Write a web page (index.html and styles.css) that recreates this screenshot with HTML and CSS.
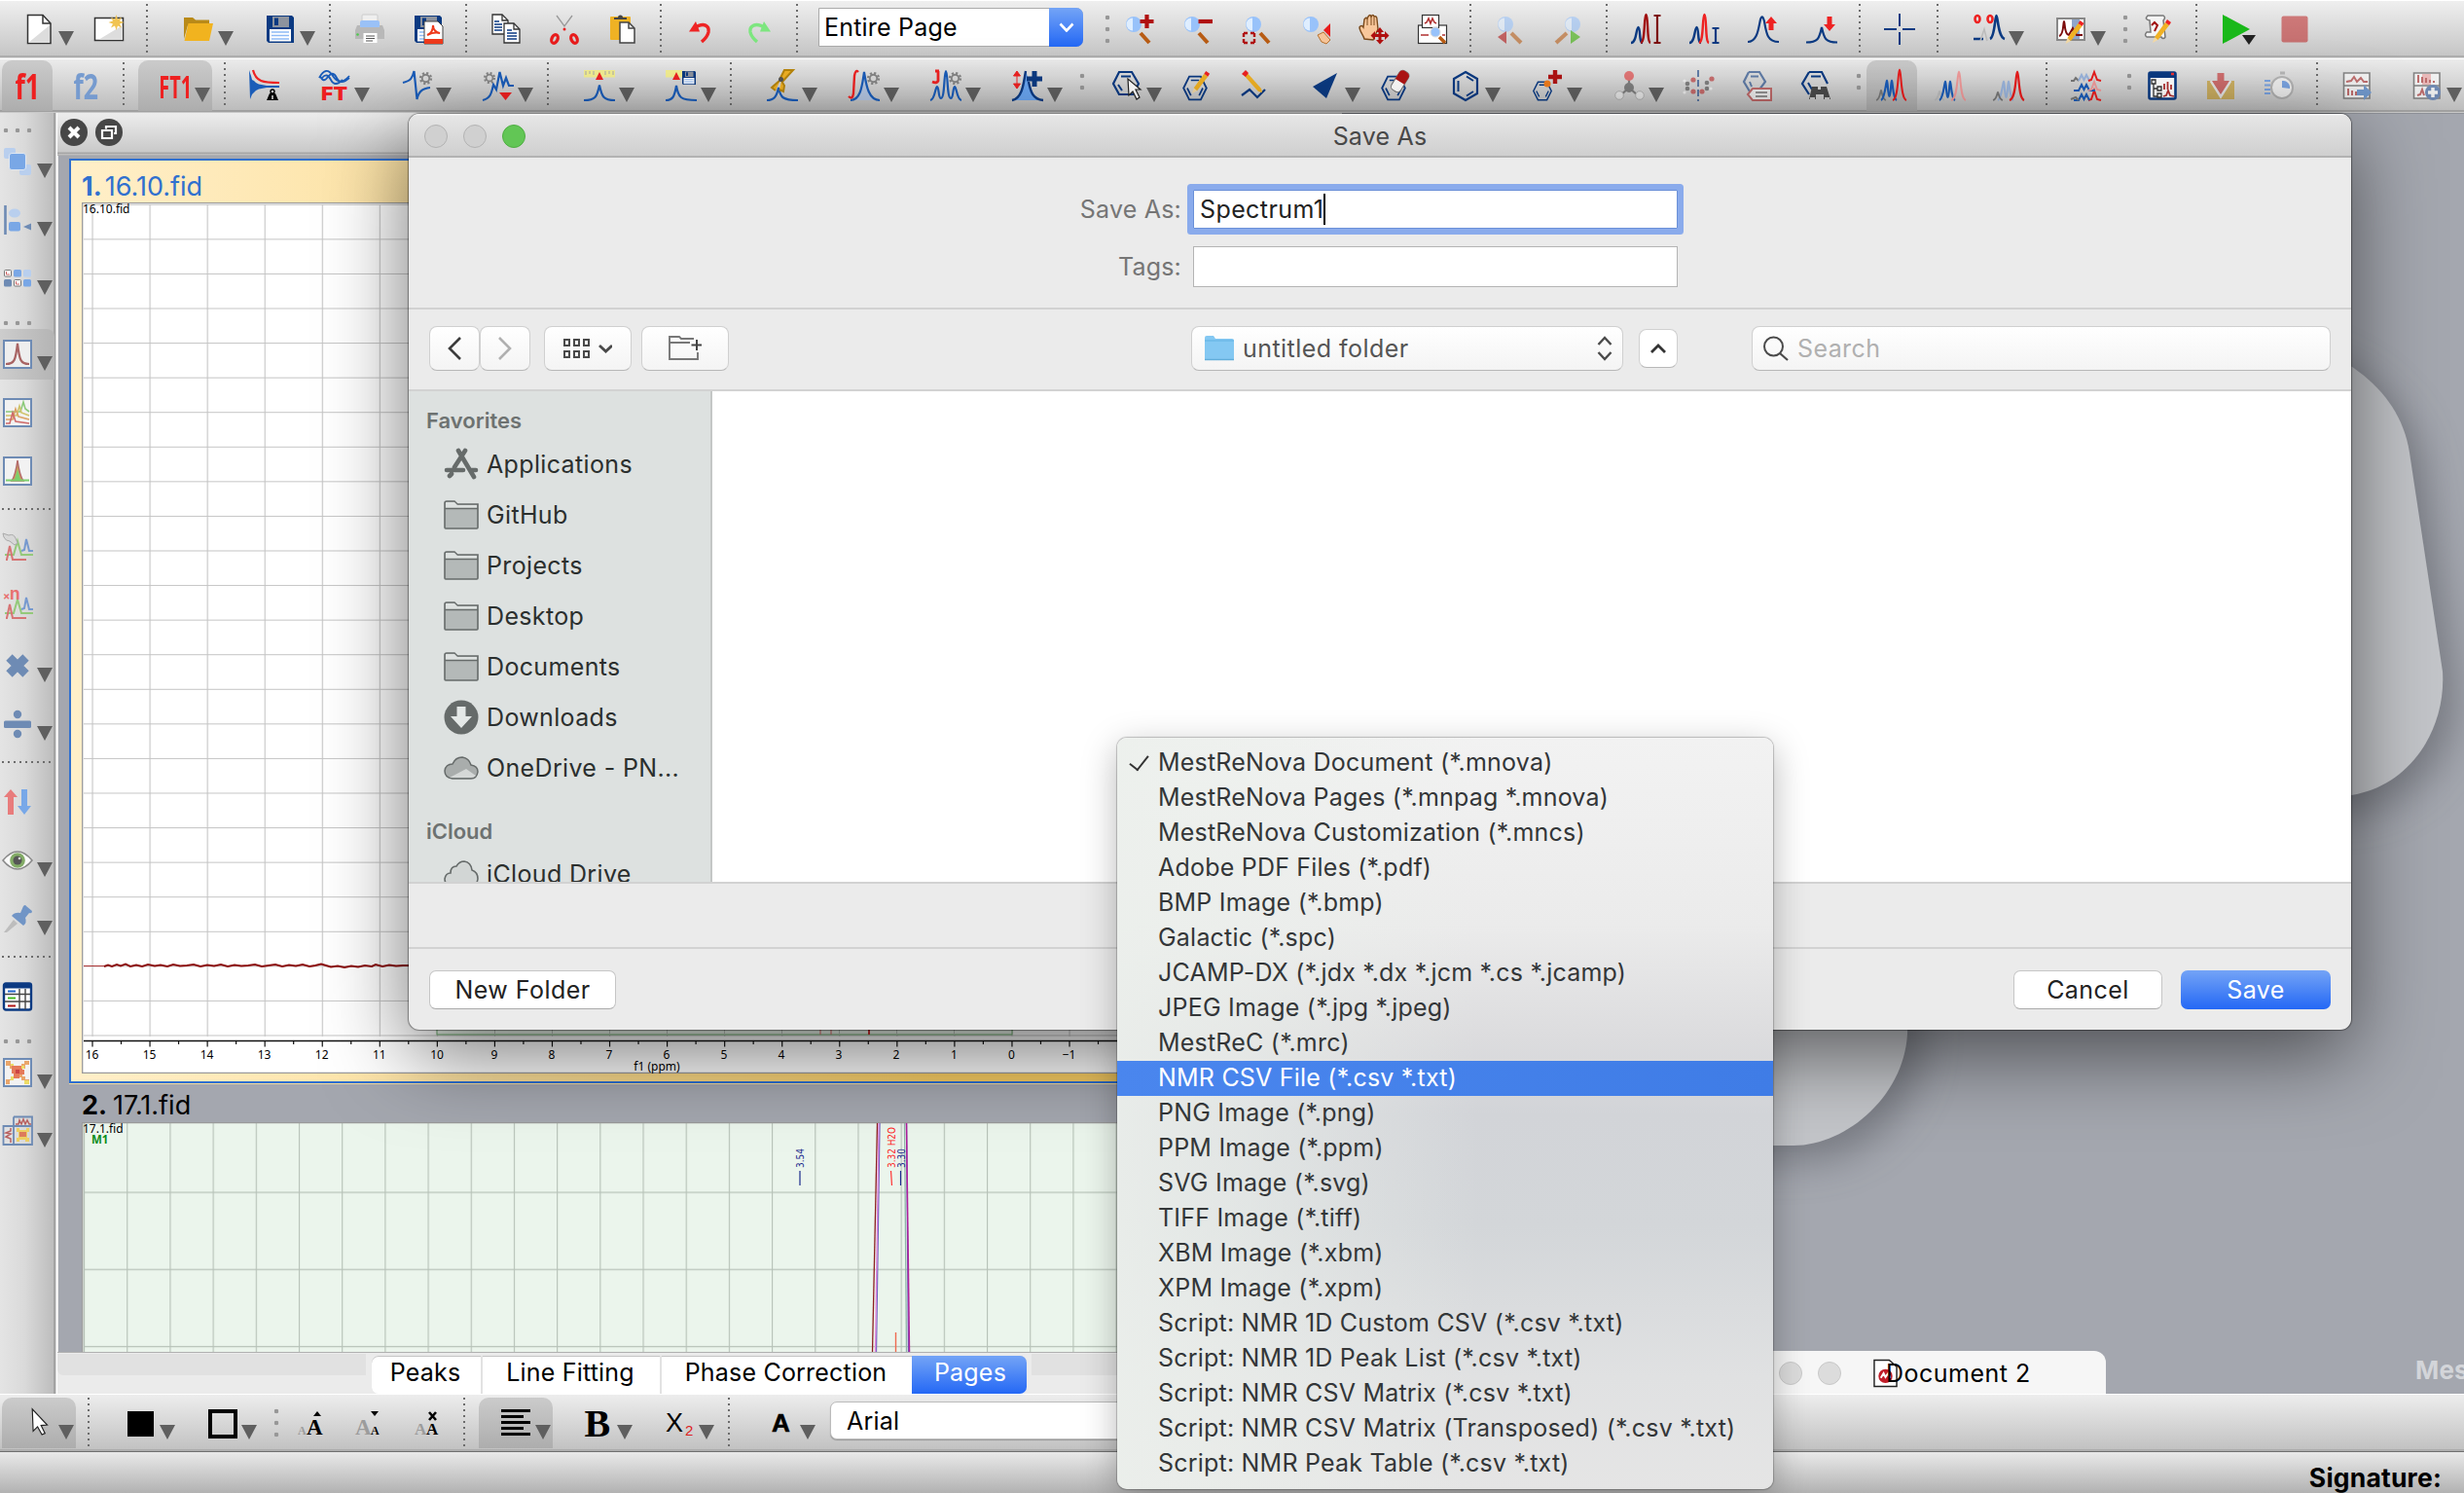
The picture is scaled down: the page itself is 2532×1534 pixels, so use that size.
FILE: index.html
```html
<!DOCTYPE html>
<html lang="en">
<head>
<meta charset="utf-8">
<title>MestReNova - Save As</title>
<link rel="stylesheet" href="styles.css">
</head>
<body>
<svg class="defs" width="0" height="0">
  <symbol id="lens" viewBox="0 0 32 32" overflow="visible">
    <path d="M16 20L25 30" stroke="#b85c14" stroke-width="4"/>
    <circle cx="9" cy="11" r="8" fill="#98c2fa"/><path d="M8 4.500A6.500 6.500 0 0 0 8 17.500z" fill="#dfeeff"/>
  </symbol>
  <symbol id="gear" viewBox="0 0 14 14" overflow="visible">
    <circle cx="7" cy="7" r="5.800" fill="none" stroke="#858585" stroke-width="2.600" stroke-dasharray="2.300 2.255"/>
    <circle cx="7" cy="7" r="4" fill="none" stroke="#858585" stroke-width="2"/>
  </symbol>
  <symbol id="pencil" viewBox="0 0 20 26" overflow="visible">
    <path d="M1 25L3 19L6.500 22z" fill="#f3d9a4"/><path d="M3 19L14 4L18 7L6.500 22z" fill="#f0b124"/><path d="M14 4L16 1L20 4L18 7z" fill="#ee2222"/>
  </symbol>
  <symbol id="hex" viewBox="0 0 32 32" overflow="visible">
    <path d="M9 2H23L30 16L23 30H9L2 16z" fill="none" stroke="#0b3a82" stroke-width="2.200"/>
    <path d="M11 6.500H21M6.500 16L11 25M25.500 16L21 25" fill="none" stroke="#0b3a82" stroke-width="2"/>
  </symbol>
  <symbol id="floppy" viewBox="0 0 32 32" overflow="visible">
    <path d="M2 2H28L30 4V30H4L2 28z" fill="#0b3a82"/><rect x="8" y="3" width="17" height="11" fill="#8d939e"/><rect x="10" y="4.500" width="4" height="7.500" fill="#0b3a82"/>
    <rect x="5" y="16" width="22" height="12.500" fill="#fff"/><path d="M7 19H25M7 22.500H25M7 26H25" stroke="#8fbaf6" stroke-width="1.600"/>
  </symbol>
  <symbol id="page" viewBox="0 0 18 22" overflow="visible">
    <path d="M1 1H11L17 7V21H1z" fill="#fff" stroke="#333" stroke-width="1.300"/><path d="M11 1V7H17" fill="none" stroke="#333" stroke-width="1.300"/>
  </symbol>
  <symbol id="peak" viewBox="0 0 32 16" overflow="visible">
    <path d="M0 15.500C12 15.500 13.500 12 16 0C18.500 12 20 15.500 32 15.500" fill="none" stroke-width="2.200"/>
  </symbol>
  <symbol id="trio" viewBox="0 0 32 32" overflow="visible">
    <path d="M0 31C4 30 4 22 5 21C6 22 6 30 10 31" fill="none" stroke="#777" stroke-width="1.800"/>
    <path d="M5 31C9 29 10 12 11 11C12 12 12 27 13.500 27C15 27 15 12 16 11C17 12 17 29 21 31" fill="none" stroke="#1a5cb8" stroke-width="2.200"/>
    <path d="M17 31C23 29 22 2 24 0C26 2 25 29 31 31" fill="none" stroke="#e81c1c" stroke-width="2"/>
  </symbol>
  <symbol id="folder" viewBox="0 0 36 30" overflow="visible">
    <path d="M1 28V3Q1 1 3 1H11L14 4H35V28Q35 29 34 29H2Q1 29 1 28z" fill="#b4b9b8" stroke="#666b6a" stroke-width="1.600"/><path d="M2 2H11L14 5H34V8H2z" fill="#dee2e1"/><path d="M1 8.500H35" stroke="#666b6a" stroke-width="1.600"/>
  </symbol>
</svg>

<div class="toolbar">
  <span class="btn menu"><svg viewBox="0 0 32 32"><path d="M4.500 1.500H20L28 10V30.500H4.500z" fill="#fff" stroke="#333" stroke-width="1.500"/><path d="M5 30L27 12V30z" fill="#ddd"/><path d="M20 1.500V10H28" fill="none" stroke="#333" stroke-width="1.500"/></svg></span>
  <span class="btn"><svg viewBox="0 0 32 32"><rect x="1.500" y="4.500" width="29" height="23" fill="#fff" stroke="#333" stroke-width="1.500"/><path d="M5 27L30 12V27z" fill="#ddd"/><path d="M23.500 1L25 6L29 3.500L27 7.500L31.500 9L27 10.500L29 14.500L25 12.500L23.500 17L22 12.500L18 14.500L20 10.500L15.500 9L20 7.500L18 3.500L22 6z" fill="#f1c453"/></svg></span>
  <span class="sep"></span>
  <span class="btn menu"><svg viewBox="0 0 32 32"><path d="M1 4H10L13 6.500H27V12H5L1 26z" fill="#b98a18"/><path d="M5.500 10H31L27 28H1.500z" fill="#f1b31f"/></svg></span>
  <span class="btn menu"><svg viewBox="0 0 32 32"><use href="#floppy"/></svg></span>
  <span class="sep"></span>
  <span class="btn"><svg viewBox="0 0 32 32"><rect x="8" y="1" width="16" height="8" rx="1" fill="#efefef" stroke="#ccc"/><rect x="6" y="7" width="20" height="8" rx="2" fill="#9ac1f7"/><path d="M3 12H6V14H26V12H29L31 17V26H1V17z" fill="#b8b8b8"/><circle cx="3.500" cy="21.500" r="1.300" fill="#4ec94e"/><rect x="9.500" y="20" width="14" height="10" fill="#fff"/><path d="M12 23H21M12 25.500H21M12 28H19" stroke="#555" stroke-width="1.200"/></svg></span>
  <span class="btn"><svg viewBox="0 0 32 32"><use href="#floppy"/><path d="M12 8H26L31 13V31H12z" fill="#fff" stroke="#444"/><path d="M15 22C20 20 21 15 21 12C21 16 24 20 28 20C24 19 19 20 15 22z" fill="none" stroke="#ee3a1c" stroke-width="2"/><rect x="12" y="26" width="19" height="5" fill="#ee3a1c"/></svg></span>
  <span class="sep"></span>
  <span class="btn"><svg viewBox="0 0 32 32"><use href="#page" x="1" y="0" width="18" height="22"/><path d="M4 8H9M4 11H12M4 14H12M4 17H12" stroke="#0b3a82" stroke-width="1.500"/><use href="#page" x="13" y="9" width="18" height="22"/><path d="M17 17H22M17 20H27M17 23H27M17 26H27" stroke="#0b3a82" stroke-width="1.500"/></svg></span>
  <span class="btn"><svg viewBox="0 0 32 32"><path d="M8 2L16 13L24 2" fill="none" stroke="#999" stroke-width="1.300"/><circle cx="16" cy="16" r="1.500" fill="#e81c1c"/><ellipse cx="6" cy="26" rx="3" ry="4.500" fill="none" stroke="#e81c1c" stroke-width="3.200" transform="rotate(25 6 26)"/><ellipse cx="26" cy="26" rx="3" ry="4.500" fill="none" stroke="#e81c1c" stroke-width="3.200" transform="rotate(-25 26 26)"/></svg></span>
  <span class="btn"><svg viewBox="0 0 32 32"><rect x="3" y="3" width="21" height="24" rx="1" fill="#efb224"/><path d="M7 6H20V4H16A2.500 2.500 0 0 0 11 4H7z" fill="#444"/><path d="M13 9H22L28 15V30H13z" fill="#fff" stroke="#444" stroke-width="1.500"/><path d="M22 9V15H28" fill="none" stroke="#444" stroke-width="1.500"/></svg></span>
  <span class="sep"></span>
  <span class="btn"><svg viewBox="0 0 32 32"><path d="M9 15C20 8 25 13 24 19Q23 24 17 29" fill="none" stroke="#ee2424" stroke-width="3.400"/><path d="M4 18.500L11 8L15 18.500z" fill="#ee2424"/></svg></span>
  <span class="btn"><svg viewBox="0 0 32 32"><path d="M23 15C12 8 6 13 7 19Q8 24 14 29" fill="none" stroke="#7de67f" stroke-width="3.400"/><path d="M28 18.500L21 8L17 18.500z" fill="#7de67f"/></svg></span>
  <span class="sep"></span>
  <div class="zoom-select"><span>Entire Page</span><i><svg viewBox="0 0 16 10"><path d="M1.500 1.500L8 8.500L14.500 1.500" fill="none" stroke="#fff" stroke-width="2.600"/></svg></i></div>
  <span class="grip three"></span>
  <span class="btn"><svg viewBox="0 0 32 32"><use href="#lens"/><path d="M22.500 1V15M15.500 8H29.500" stroke="#b01010" stroke-width="4.200"/></svg></span>
  <span class="btn"><svg viewBox="0 0 32 32"><use href="#lens"/><path d="M15.500 8H30" stroke="#b01010" stroke-width="4.200"/></svg></span>
  <span class="btn"><svg viewBox="0 0 32 32"><use href="#lens" x="3"/><path d="M2 20h4M2 20v4M13 20h-4M13 20v4M2 30h4M2 30v-4M13 30h-4M13 30v-4" stroke="#b01010" stroke-width="2.400"/></svg></span>
  <span class="btn"><svg viewBox="0 0 32 32"><circle cx="11" cy="11" r="8" fill="#98c2fa"/><path d="M10 4.500A6.500 6.500 0 0 0 10 17.500z" fill="#dfeeff"/><path d="M31 10V24L24 17z" fill="#e81c1c"/><path d="M18 22L24 19L31 27L27 31L22 29z" fill="#f6c59a" stroke="#b8722e"/></svg></span>
  <span class="btn"><svg viewBox="0 0 32 32"><path d="M6 26C5 22 1 18 1 14Q3 11 5 14L6 6Q8 3 9 5L10 3Q12 0 13 3Q15 0 16 3Q19 2 19 6L20 16L15 27z" fill="#f8c79b" stroke="#7a4a1c" stroke-width="1.400"/><path d="M9 5V12M13 3V12M16 4V12" stroke="#7a4a1c"/><path d="M22 14L26 19H23.500V21H27V18L31.500 22.500L27 27V24H23.500V27H26L22 31.500L18 27H20.500V24H17V27L12.500 22.500L17 18V21H20.500V19H18z" fill="#b01010"/></svg></span>
  <span class="btn"><svg viewBox="0 0 32 32"><rect x="1.500" y="12" width="29" height="18.500" fill="#fff" stroke="#333" stroke-width="1.200"/><rect x="5.500" y="1.500" width="17" height="13" fill="#fff" stroke="#333" stroke-width="1.200"/><path d="M8 10L10 9L12 5L14 10L16 5L18 9L20 10M4 22H12M26 22H29" fill="none" stroke="#b03030" stroke-width="1.600"/><circle cx="19" cy="19" r="5" fill="#98c2fa" stroke="#ddd"/><path d="M23 24L29 30" stroke="#b85c14" stroke-width="3.500"/></svg></span>
  <span class="sep"></span>
  <span class="btn off"><svg viewBox="0 0 32 32"><circle cx="11" cy="11" r="8" fill="#98c2fa"/><path d="M10 4.500A6.500 6.500 0 0 0 10 17.500z" fill="#dfeeff"/><path d="M17 20L27 30" stroke="#b85c14" stroke-width="4"/><path d="M3 24L12 18V31z" fill="#b01010"/></svg></span>
  <span class="btn off"><svg viewBox="0 0 32 32"><circle cx="20" cy="11" r="8" fill="#98c2fa"/><path d="M19 4.500A6.500 6.500 0 0 0 19 17.500z" fill="#dfeeff"/><path d="M14 20L3 30" stroke="#b85c14" stroke-width="4"/><path d="M28 24L18 17V31z" fill="#38b000"/></svg></span>
  <span class="sep"></span>
  <span class="btn"><svg viewBox="0 0 32 32"><path d="M0 30C6 30 5 15 7.500 14C10 15 8 30 12 30" fill="none" stroke="#0b3a82" stroke-width="2.400"/><path d="M10 30C15 29 13 2 15.500 1C18 2 16 29 20 30" fill="none" stroke="#a01010" stroke-width="2.400"/><path d="M27 2V30M23.500 2H30.500M23.500 30H30.500" stroke="#7c0c0c" stroke-width="2.200"/></svg></span>
  <span class="btn"><svg viewBox="0 0 32 32"><path d="M0 30C6 30 5 15 7.500 14C10 15 8 30 12 30" fill="none" stroke="#0b3a82" stroke-width="2.400"/><path d="M10 30C15 29 13 2 15.500 1C18 2 16 29 20 30" fill="none" stroke="#ee2222" stroke-width="2.400"/><path d="M27 15V30M23.500 15H30.500M23.500 30H30.500" stroke="#0b3a82" stroke-width="2.200"/></svg></span>
  <span class="btn"><svg viewBox="0 0 32 32"><path d="M0 29C10 29 11 15 13 6Q15 0 17 8C19 20 20 29 32 29" fill="none" stroke="#0b3a82" stroke-width="2.200"/><path d="M24 3L30 10H26.500V17H21.500V10H18z" fill="#ee2222"/></svg></span>
  <span class="btn"><svg viewBox="0 0 32 32"><use href="#peak" y="14" width="32" height="16" stroke="#0b3a82"/><path d="M24 18L30 11H26.500V3H21.500V11H18z" fill="#ee2222"/></svg></span>
  <span class="sep"></span>
  <span class="btn"><svg viewBox="0 0 32 32"><path d="M16 0V13M16 19V32M0 16H13M19 16H32" stroke="#0b3a82" stroke-width="2"/></svg></span>
  <span class="sep"></span>
  <span class="btn menu"><svg viewBox="0 0 32 32"><path d="M0 26H10M17 26C22 24 22 2 23.500 2C25 2 25 24 32 26" fill="none" stroke="#0b3a82" stroke-width="2.600"/><ellipse cx="4" cy="5.500" rx="2.500" ry="3.500" fill="none" stroke="#ee2222" stroke-width="2.600"/><ellipse cx="17" cy="5.500" rx="2.500" ry="3.500" fill="none" stroke="#ee2222" stroke-width="2.600"/><path d="M7 28L11 16L14 28" fill="none" stroke="#bbb" stroke-width="1.500"/></svg></span>
  <span class="btn menu"><svg viewBox="0 0 32 32"><rect x="2" y="5" width="28" height="22" fill="#fff" stroke="#888" stroke-width="2"/><rect x="17" y="6" width="8" height="20" fill="#8fa6cc"/><path d="M4 23C9 22 8 8 9 8C10 8 9 22 14 22L18 15L22 22H28" fill="none" stroke="#7c0c0c" stroke-width="2"/><use href="#pencil" x="7" y="6" width="25" height="26"/></svg></span>
  <span class="grip three"></span>
  <span class="btn"><svg viewBox="0 0 32 32"><path d="M5 2H21Q24 4 21 7L23 24Q21 27 19 24H4Q1 22 4 19H8L7 7Q1 6 5 2z" fill="#f4f4f4" stroke="#777" stroke-width="1.500"/><path d="M9 12L12 9L15 12L12 18" fill="none" stroke="#a01010" stroke-width="2"/><use href="#pencil" x="7" y="5" width="24" height="26"/></svg></span>
  <span class="sep"></span>
  <span class="btn run"><svg viewBox="0 0 32 32"><path d="M2 1L30 16L2 31z" fill="#19b819"/><path d="M22 22H36L29 32z" fill="#222"/></svg></span>
  <span class="btn off"><svg viewBox="0 0 32 32"><rect x="2.500" y="2.500" width="27" height="27" rx="2" fill="#be2b2b"/></svg></span>
</div>

<div class="toolbar second">
  <span class="btn on"><b class="f1">f1</b></span>
  <span class="btn"><b class="f2">f2</b></span>
  <span class="sep"></span>
  <span class="btn menu on"><b class="ft">FT1</b></span>
  <span class="sep"></span>
  <span class="btn"><svg viewBox="0 0 32 32"><path d="M0 0L2 6L3 10L5 11L7 13L10 14.500L18 16H31V18H18L10 19.500L7 21L5 23L3 25L1 30z" fill="#1a5cb8"/><path d="M4 0C7 12 14 13 31 13" fill="none" stroke="#ee2222" stroke-width="2.200"/><path d="M21 24H27L30 31H18z"/><circle cx="24" cy="22" r="2" fill="none" stroke="#000" stroke-width="1.400"/><path d="M24 26V30" stroke="#ccc" stroke-width="1.600"/></svg></span>
  <span class="btn menu"><svg viewBox="0 0 32 32"><path d="M0 8Q7-5 14 6T31 6M1 6Q4 14 9 7T18 8T31 8M3 8Q8 2 12 10T24 10" fill="none" stroke="#1a5cb8" stroke-width="1.800"/><text x="2" y="31" class="ft-mini" textLength="27" lengthAdjust="spacingAndGlyphs">FT</text></svg></span>
  <span class="btn menu"><svg viewBox="0 0 32 32"><path d="M2 13C10 11 12 8 13.500 1L16.500 30C18 22 22 19 30 18" fill="none" stroke="#1a5cb8" stroke-width="2.200"/><use href="#gear" x="19" y="2" width="13" height="13"/></svg></span>
  <span class="btn menu"><svg viewBox="0 0 32 32"><path d="M0 31C8 29 9 24 11 15L14 20L17.500 2L21 16L24 8L27 16H32" fill="none" stroke="#1a5cb8" stroke-width="2.200"/><use href="#gear" x="1" y="2" width="12" height="12"/><path d="M17 23H30L23.500 31z" fill="#ee2222"/></svg></span>
  <span class="sep"></span>
  <span class="btn menu"><svg viewBox="0 0 32 32"><rect width="32" height="7.500" fill="#f4ef92"/><path d="M2 1V5M6 1V4M10 1V5M22 1V5M26 1V4M30 1V5" stroke="#aaa"/><path d="M16 2L20 10H12z" fill="#ee2222"/><use href="#peak" y="15.500" width="32" height="16" stroke="#1a5cb8"/></svg></span>
  <span class="btn menu"><svg viewBox="0 0 32 32"><rect width="17" height="7.500" fill="#f4ef92"/><path d="M11 2L15 10H7z" fill="#ee2222"/><path d="M0 31C7 31 9 28 11 16C13 28 15 31 32 31" fill="none" stroke="#1a5cb8" stroke-width="2.200"/><use href="#floppy" x="16" y="0" width="16" height="16"/></svg></span>
  <span class="sep"></span>
  <span class="btn menu"><svg viewBox="0 0 32 32"><path d="M0 31C7 31 10 28 12 18C14 28 16 31 32 31" fill="none" stroke="#1a5cb8" stroke-width="2.200"/><path d="M14 8L18 0H27L16 12zM14 10L5 18L9 21M15 11L18 16L17 22L13 20" fill="#f0b124" stroke="#b8860b" stroke-width="2"/><circle cx="14.500" cy="9.500" r="2.500" fill="#555"/></svg></span>
  <span class="btn menu"><svg viewBox="0 0 32 32"><path d="M3 31C13 30 14 14 16 4C18 14 20 30 30 31z" fill="#b4c6e2"/><path d="M2 31C13 31 14 14 16 2C18 14 20 31 32 31" fill="none" stroke="#1a5cb8" stroke-width="2.200"/><path d="M0 27Q4 31 5 24L6 6Q7-1 10 2" fill="none" stroke="#ee2222" stroke-width="2.400"/><use href="#gear" x="19" y="2" width="13" height="13"/></svg></span>
  <span class="btn menu"><svg viewBox="0 0 32 32"><path d="M0 31C5 30 5 17 7 17C9 17 8 29 11 29C15 29 14 1 16 1C18 1 17 29 21 29C24 29 23 17 25 17C27 17 27 30 32 31" fill="none" stroke="#1a5cb8" stroke-width="2.200"/><path d="M5 1H9M8 1V11Q7 14 2 12" fill="none" stroke="#ee2222" stroke-width="2.800"/><use href="#gear" x="19" y="2" width="13" height="13"/></svg></span>
  <span class="btn menu"><svg viewBox="0 0 32 32"><path d="M2 31C11 28 11 10 14 1C18 10 19 28 31 31z" fill="#6aa6f2"/><path d="M0 31C11 29 12 12 14 1M17 12C19 22 21 30 32 31" fill="none" stroke="#0b3a82" stroke-width="2.400"/><path d="M5 5V15M5 1L8.500 6H1.500zM5 19L1.500 14H8.500z" fill="#ee2222" stroke="#ee2222"/><path d="M23 1V17M15 9H31" stroke="#0b3a82" stroke-width="5"/></svg></span>
  <span class="grip two"></span>
  <span class="btn menu"><svg viewBox="0 0 32 32"><path d="M8 2H21L28 14L22 25H8L2 14z" fill="none" stroke="#0b3a82" stroke-width="2.200"/><path d="M10 6.500H20M7 15L11 21" stroke="#0b3a82" stroke-width="2"/><path d="M17 9L18 26L22 22L26 30L29 28L25 20H30z" fill="#fff" stroke="#222" stroke-width="1.200"/></svg></span>
  <span class="btn"><svg viewBox="0 0 32 32"><use href="#hex" x="0" y="5" width="28" height="27"/><use href="#pencil" x="9" y="0" width="21" height="25"/></svg></span>
  <span class="btn"><svg viewBox="0 0 32 32"><path d="M2 26L10 20L18 28L26 20" fill="none" stroke="#0b3a82" stroke-width="2.200"/><path d="M6 1L3 4L19 22L23 23L22 19z" fill="#f0b124"/><path d="M6 0L9 3L6 7L2 4z" fill="#ee2222"/></svg></span>
  <span class="btn menu"><svg viewBox="0 0 32 32"><path d="M3 17L28 3L17 29z" fill="#0b3a82"/></svg></span>
  <span class="btn"><svg viewBox="0 0 32 32"><use href="#hex" x="0" y="5" width="28" height="27"/><g transform="rotate(32 21 11)"><rect x="15.500" y="0" width="11" height="23" rx="4" fill="#fff" stroke="#777"/><path d="M15.500 12V4Q15.500 0 21 0T26.500 4V12z" fill="#b01414"/></g></svg></span>
  <span class="btn menu"><svg viewBox="0 0 32 32"><path d="M16 2L28 9V24L16 31L4 24V9z" fill="none" stroke="#0b3a82" stroke-width="2.200"/><path d="M8.500 11V22M17 6.500L24 11M17 26.500L24 22" stroke="#0b3a82" stroke-width="2"/></svg></span>
  <span class="btn menu"><svg viewBox="0 0 32 32"><use href="#hex" x="0" y="11" width="22" height="21"/><circle cx="16" cy="14" r="3.500" fill="#f07c1c"/><path d="M24 0V14M17 7H31" stroke="#b01414" stroke-width="4.400"/></svg></span>
  <span class="btn menu off"><svg viewBox="0 0 32 32"><path d="M16 5V18L6 27M16 18L26 27" fill="none" stroke="#444" stroke-width="2.200"/><circle cx="16" cy="6" r="5" fill="#e62e2e"/><circle cx="16" cy="18" r="5" fill="#444"/><circle cx="6" cy="26" r="4.300" fill="#f4f4f4" stroke="#999"/><circle cx="27" cy="26" r="4.300" fill="#f4f4f4" stroke="#999"/></svg></span>
  <span class="btn off"><svg viewBox="0 0 32 32"><path d="M15 0V32" stroke="#0b3a82" stroke-width="2" stroke-dasharray="7 3"/><g fill="#b22"><circle cx="10" cy="10" r="2.600"/><circle cx="10" cy="22" r="2.600"/><circle cx="19" cy="22" r="2.600"/><circle cx="29" cy="9" r="2.600"/></g><g fill="#444"><circle cx="4" cy="14" r="2.300"/><circle cx="4" cy="19" r="2.300"/><circle cx="24" cy="13" r="2.300"/><circle cx="24" cy="19" r="2.300"/></g><g fill="#fff"><circle cx="1" cy="11" r="1.600"/><circle cx="1" cy="23" r="1.600"/><circle cx="28" cy="19" r="1.600"/></g></svg></span>
  <span class="btn off"><svg viewBox="0 0 32 32"><path d="M7 2H18L24 12L18 20H13M7 2L2 12L8 22" fill="none" stroke="#0b3a82" stroke-width="2.200"/><path d="M9 6.500H17M8 12L10 17" stroke="#0b3a82" stroke-width="2"/><path d="M6 25L11 19H30V31H11z" fill="#fff" stroke="#b22222" stroke-width="2"/><path d="M14 23H26M14 27H26" stroke="#666" stroke-width="1.800"/></svg></span>
  <span class="btn"><svg viewBox="0 0 32 32"><path d="M9 2H22L28 14M9 2L2 14L9 25" fill="none" stroke="#0b3a82" stroke-width="2.200"/><path d="M11 6.500H21M8 13L12 20" stroke="#0b3a82" stroke-width="2"/><path d="M12 17H18V20H21V17H27L31 30H24V25H16V30H9z" fill="#4a4a4a"/><path d="M10 29H15M25 29H30" stroke="#eee" stroke-width="1.500"/></svg></span>
  <span class="grip two"></span>
  <span class="btn on"><svg viewBox="0 0 32 32"><use href="#trio"/></svg></span>
  <span class="btn"><svg viewBox="0 0 32 32"><path d="M0 31C4 30 4 23 5 22C6 23 6 30 10 31" fill="none" stroke="#bbb" stroke-width="1.800"/><path d="M5 31C9 29 10 13 11 12C12 13 12 28 13.500 28C15 28 15 13 16 12C17 13 17 29 21 31" fill="none" stroke="#1a5cb8" stroke-width="2.200"/><path d="M17 31C24 29 23 4 25 2C27 4 26 29 32 31" fill="none" stroke="#f09a9a" stroke-width="2"/></svg></span>
  <span class="btn"><svg viewBox="0 0 32 32"><path d="M5 31C9 29 10 13 11 12C12 13 12 28 13.500 28C15 28 15 13 16 12C17 13 17 29 21 31" fill="none" stroke="#9ab4dc" stroke-width="2.200"/><path d="M0 31C4 30 4 24 5 23C6 24 6 30 10 31" fill="none" stroke="#777" stroke-width="1.800"/><path d="M17 31C24 29 23 4 25 2C27 4 26 29 32 31" fill="none" stroke="#e81c1c" stroke-width="2.200"/></svg></span>
  <span class="sep"></span>
  <span class="btn"><svg viewBox="0 0 32 32"><g fill="none" stroke-width="2"><path d="M0 11H3L5 8L8 11" stroke="#777"/><path d="M8 11L11 5L13.500 10L16 5L19 11" stroke="#9ab4dc"/><path d="M18 11L21 10L24 2L27 10L31 11M18 31L21 30L24 21L27 30L31 31" stroke="#e81c1c"/><path d="M3 21H8L11 15L13.500 20L16 15L19 21H25M3 31H8L11 25L13.500 30L16 25L19 31" stroke="#1a5cb8"/><path d="M18 21L21 20L24 12L27 20L31 21" stroke="#f09a9a"/><path d="M0 30L5 28L8 31" stroke="#777"/></g></svg></span>
  <span class="grip two"></span>
  <span class="btn"><svg viewBox="0 0 32 32"><rect x="2.500" y="2.500" width="27" height="27" rx="1.500" fill="#fff" stroke="#0b3a82" stroke-width="2.600"/><rect x="2" y="2" width="28" height="6" fill="#0b3a82"/><path d="M25 4H28" stroke="#e33" stroke-width="2.500"/><path d="M5 10H9V14H5zM7 14V27H11M7 19H11M11 17H15V21H11zM11 24H15V28H11z" fill="none" stroke="#333" stroke-width="1.300"/><path d="M18 20V14M21.500 20V12M25 20V15M17 27L20 26L22 21L24 26L28 27" fill="none" stroke="#b03030" stroke-width="1.800"/></svg></span>
  <span class="btn off"><svg viewBox="0 0 32 32"><path d="M2 11H30V30H2z" fill="#c29210"/><path d="M6 11L16 27L26 11" fill="none" stroke="#eee" stroke-width="3"/><path d="M12.500 3H19.500V11H25L16 25L7 11H12.500z" fill="#c42020"/></svg></span>
  <span class="btn off"><svg viewBox="0 0 32 32"><circle cx="19" cy="18" r="11" fill="#fff" stroke="#999" stroke-width="2"/><path d="M17 3H22" stroke="#999" stroke-width="3"/><path d="M19 18V11A7 7 0 0 1 27 19z" fill="#3a80e8"/><path d="M1 11H7M1 15.500H7M1 20H7M1 24H7" stroke="#3a80e8" stroke-width="2"/></svg></span>
  <span class="sep"></span>
  <span class="btn off"><svg viewBox="0 0 32 32"><path d="M2.500 3H29V29H2.500zM2.500 16H29" fill="#fff" stroke="#444" stroke-width="1.600"/><path d="M5 12L10 11L13 7L16 12L20 8L23 12H27" fill="none" stroke="#a22" stroke-width="2"/><path d="M7 19V26M11 21V26M15 22V26" stroke="#a22" stroke-width="2"/><path d="M16 20H23V15L31 23L23 31V26H16z" fill="#2d6fc4"/></svg></span>
  <span class="btn menu off"><svg viewBox="0 0 32 32"><path d="M2.500 3H29V29H2.500zM2.500 16H29" fill="#fff" stroke="#444" stroke-width="1.600"/><rect x="11" y="4" width="9" height="11" fill="#f4a0a0"/><path d="M7 5V13M11 7V13M15 8V13M19 10V13M23 11V13M6 26L9 25L11 20L13 26" fill="none" stroke="#a22" stroke-width="2"/><circle cx="22" cy="23" r="8" fill="#2b569c"/><path d="M22 18V28M17 23H27" stroke="#fff" stroke-width="3.500"/></svg></span>
</div>

<div class="main">
  <div class="sidebar">
    <span class="vgrip"></span>
    <span class="cell menu"><svg viewBox="0 0 32 32"><rect x="2" y="2" width="12" height="11" rx="2" fill="#b9cfee"/><rect x="18" y="19" width="12" height="11" rx="2" fill="#b9cfee"/><rect x="7.500" y="7.500" width="17" height="17" rx="2.500" fill="#79a7e6" stroke="#dfe7f2"/></svg></span>
    <span class="cell menu"><svg viewBox="0 0 32 32"><path d="M3.500 1V31" stroke="#6e8bb4" stroke-width="2.600"/><ellipse cx="13" cy="9" rx="6" ry="4.500" fill="#b9cfee"/><rect x="7" y="18" width="12" height="9.500" rx="2" fill="#79a7e6"/><path d="M22 23L30 19.500V26.500z" fill="#6e8bb4"/></svg></span>
    <span class="cell menu"><svg viewBox="0 0 32 32"><rect x="2.500" y="7.500" width="7" height="6.500" rx="1" fill="#fff" stroke="#777"/><rect x="12" y="7" width="8" height="7.500" rx="1.500" fill="#79a7e6"/><rect x="22" y="7" width="8" height="7.500" rx="1.500" fill="#b9cfee"/><rect x="2" y="17" width="8" height="7.500" rx="1.500" fill="#6e8bb4"/><rect x="12.500" y="17.500" width="7" height="6.500" rx="1" fill="#fff" stroke="#777"/><rect x="22" y="17" width="8" height="7.500" rx="1.500" fill="#79a7e6"/><path d="M4.500 9V12H8M14.500 19V22H18" fill="none" stroke="#c66"/></svg></span>
    <span class="vgrip"></span>
    <span class="cell menu on"><svg viewBox="0 0 32 32"><rect x="2" y="2" width="28" height="28" fill="#eee" stroke="#6e8bb4" stroke-width="2"/><path d="M4 26C13 26 14 22 16 5C18 22 19 26 28 26" fill="none" stroke="#a86464" stroke-width="2.200"/></svg></span>
    <span class="cell"><svg viewBox="0 0 32 32"><rect x="2" y="2" width="28" height="28" fill="#f2f2f2" stroke="#6e8bb4" stroke-width="2"/><g fill="none" stroke-width="1.600"><path d="M4 15H19L22 5L24 12L28 15" stroke="#8cc97a"/><path d="M4 19H15L18 9L20 16L28 19" stroke="#cfc36a"/><path d="M4 23H11L14 12L17 20L28 23" stroke="#dca265"/><path d="M4 27H8L11 16L14 25L28 27" stroke="#cf6a6a"/></g></svg></span>
    <span class="cell"><svg viewBox="0 0 32 32"><rect x="2" y="2" width="28" height="28" fill="#f2f2f2" stroke="#6e8bb4" stroke-width="2"/><path d="M10 26C13 22 15 12 16 5C17 12 19 22 22 26z" fill="#c9a05a" stroke="#b46c6c" stroke-width="1.500"/><path d="M4 25.500H28M14 25L16 18L18 25z" fill="#7ccf6c" stroke="#7ccf6c" stroke-width="2"/></svg></span>
    <span class="vsep"></span>
    <span class="cell"><svg viewBox="0 0 32 32"><path d="M20 18L23 17L25 6L28 18H32" fill="none" stroke="#7699cf" stroke-width="2"/><path d="M3 22H12L16 8L20 22H32" fill="none" stroke="#94c97a" stroke-width="2"/><path d="M4 27H5L8 13L11 27H25" fill="none" stroke="#d67474" stroke-width="2"/><path d="M1 0L7 2Q12 0 14 5L16 10L13 12L8 8Q4 8 2 4z" fill="#d8d8d8" stroke="#aaa"/></svg></span>
    <span class="cell"><svg viewBox="0 0 32 32"><path d="M20 18L23 17L25 6L28 18H32" fill="none" stroke="#7699cf" stroke-width="2"/><path d="M3 22H12L16 8L20 22H32" fill="none" stroke="#94c97a" stroke-width="2"/><path d="M4 27H5L8 13L11 27H25" fill="none" stroke="#d67474" stroke-width="2"/><text x="1" y="8" class="xn"><tspan class="xs">×</tspan><tspan x="8">n</tspan></text></svg></span>
    <span class="cell menu"><svg viewBox="0 0 32 32"><path d="M7.500 7.500L24.500 24.500M24.500 7.500L7.500 24.500" stroke="#6e8bb4" stroke-width="9"/></svg></span>
    <span class="cell menu"><svg viewBox="0 0 32 32"><rect x="2" y="12.500" width="28" height="7.500" rx="1.500" fill="#6e8bb4"/><circle cx="16" cy="6" r="4.200" fill="#6e8bb4"/><circle cx="16" cy="26" r="4.200" fill="#6e8bb4"/></svg></span>
    <span class="vsep"></span>
    <span class="cell"><svg viewBox="0 0 32 32"><path d="M9 3L16 11H12V29H6V11H2z" fill="#e87c7c"/><path d="M23 29L30 20H26V3H20V20H16z" fill="#78a8e8"/></svg></span>
    <span class="cell menu"><svg viewBox="0 0 32 32"><path d="M1 16Q16-2 31 16Q16 34 1 16z" fill="#fafafa" stroke="#888" stroke-width="1.500"/><circle cx="16" cy="16" r="7.800" fill="#82ab66"/><circle cx="16" cy="16" r="4.500" fill="#555"/><circle cx="18" cy="14" r="1.300" fill="#ddd"/></svg></span>
    <span class="cell menu"><svg viewBox="0 0 32 32"><path d="M12 17L16 21L5 30L2 30z" fill="#bdbdbd"/><path d="M22 3Q24 1 25 3L31 8Q31 11 28 10L24 15Q26 20 22 23L10 13Q13 9 19 10z" fill="#7195c6"/></svg></span>
    <span class="vsep"></span>
    <span class="cell"><svg viewBox="0 0 32 32"><rect x="2" y="2.500" width="28" height="27" rx="2" fill="#fff" stroke="#0b3a82" stroke-width="2.400"/><rect x="2" y="2" width="28" height="5.500" fill="#0b3a82"/><path d="M3 13.500H29M3 21H29M18 8V29M24 8V29" stroke="#444" stroke-width="1.400"/><path d="M6 10.500H14" stroke="#2266cc" stroke-width="2"/><path d="M6 17.500H14" stroke="#44bb22" stroke-width="2"/><path d="M6 25.500H14" stroke="#b01414" stroke-width="2"/></svg></span>
    <span class="vgrip"></span>
    <span class="cell menu"><svg viewBox="0 0 32 32"><rect x="2" y="2" width="28" height="28" fill="#f2f2f2" stroke="#6e8bb4" stroke-width="2"/><path d="M4 4H9V7H12V10H20V7H23V4H28V8H24V12H21V20H24V23H28V28H23V24H20V21H12V24H8V28H4V23H9V20H12V12H8V9H4z" fill="#eaa66a"/><path d="M10 9H21V13H23V18H18V22H12V17H10z" fill="#e57a5a"/><path d="M14 13H18V17H14z" fill="#c44"/><path d="M9 7H12V9H9zM20 9H23V12H20zM9 20H12V24H9zM23 24H28V28H23z" fill="#ecdc66"/></svg></span>
    <span class="cell menu"><svg viewBox="0 0 32 32"><path d="M12 1.500H31V30H1.500V11H31M12 1.500V30" fill="none" stroke="#6e8bb4" stroke-width="1.800"/><path d="M14 9H17L18 5L20 9L22 4L24 9L26 5L28 9H30M9 13V16L4 18L9 19L4 22L9 24V28" fill="none" stroke="#b86060" stroke-width="1.500"/><path d="M15 13H18V15H25V13H28V17H26V23H28V27H24V25H18V27H15V23H17V17H15z" fill="#ecce62"/><path d="M18 17H25V22H18z" fill="#dd7a5a"/></svg></span>
  </div>

  <div class="pages">
    <div class="pages-head">
      <svg class="round" viewBox="0 0 28 28"><circle cx="14" cy="14" r="14" fill="#474747"/><path d="M9 9L19 19M19 9L9 19" stroke="#fff" stroke-width="4"/></svg>
      <svg class="round" viewBox="0 0 28 28"><circle cx="14" cy="14" r="14" fill="#474747"/><path d="M11 10.500V8H21V15H19M7 12H17V20H7z" fill="none" stroke="#fff" stroke-width="2.200"/></svg>
    </div>
    <div class="pages-body">
      <div class="sheet active">
        <div class="sheet-title"><b>1.</b>16.10.fid</div>
        <svg class="plot" width="1290" height="895" viewBox="0 0 1290 895">
          <defs>
            <pattern id="grid1" patternUnits="userSpaceOnUse" x="10.500" y="1.800" width="59.060" height="35.570"><path d="M.5 0V36M0 .5H60" stroke="#c4c4c4" stroke-width="1.200"/></pattern>
          </defs>
          <rect width="1290" height="895" fill="#fff"/>
          <rect x="2" y="2" width="1288" height="855" fill="url(#grid1)"/>
          <rect x="365" y="0" width="591" height="855" fill="#eaf4ea" stroke="#6fae6f" stroke-width="1"/>
          <path d="M424.500 840V855M483.500 840V855M542.500 840V855M601.500 840V855M660.500 840V855M719.500 840V855M778.500 840V855M837.500 840V855M896.500 840V855" stroke="#bcc6bc"/>
          <path d="M759 840V855M770 840V855" stroke="#d66"/><path d="M809 840V855" stroke="#c33" stroke-width="2"/>
          <path d="M0 .7H1290M.7 0V895M0 894.300H1290" stroke="#9a9a9a" stroke-width="1.300"/>
          <path d="M2 784.500H23" stroke="#a33" stroke-width="1"/>
          <path d="M23 785L27 783.500L31 785L36 783L40 784.500L45 782.500L50 785L56 783.500L62 785L68 783L75 784.500L81 783.500L88 785L94 783L101 784.500L108 784L115 783L122 785L129 783.500L136 784.500L143 783L150 785L157 783.500L164 784.500L171 784L178 783L185 785L192 784L199 783L206 785L213 783.500L220 784.500L227 783L234 785L240 784L246 782.500L251 784L256 785.500L263 784.500L270 786L277 784.500L284 785.500L291 784L298 785L302 783L309 785L316 783.500L323 784.500L330 784L337 784" fill="none" stroke="#8b0c0c" stroke-width="2"/>
          <path d="M2 861.500H1290" stroke="#111" stroke-width="1.500"/>
          <path d="M10.500 862v5.500m59.060-5.500v5.500m59.060-5.500v5.500m59.060-5.500v5.500m59.060-5.500v5.500m59.060-5.500v5.500m59.060-5.500v5.500m59.060-5.500v5.500m59.060-5.500v5.500m59.060-5.500v5.500m59.060-5.500v5.500m59.060-5.500v5.500m59.060-5.500v5.500m59.060-5.500v5.500m59.060-5.500v5.500m59.060-5.500v5.500m59.060-5.500v5.500m59.060-5.500v5.500m59.060-5.500v5.500" transform="translate(.5 0)" stroke="#111" stroke-width="1.200"/>
          <path d="M40.500 862v3m59.060-3v3m59.060-3v3m59.060-3v3m59.060-3v3m59.060-3v3m59.060-3v3m59.060-3v3m59.060-3v3m59.060-3v3m59.060-3v3m59.060-3v3m59.060-3v3m59.060-3v3m59.060-3v3m59.060-3v3m59.060-3v3m59.060-3v3" stroke="#111" stroke-width="1.200"/>
          <g class="ticks">
            <text x="10.500" y="879.500">16</text><text x="69.500" y="879.500">15</text><text x="128.500" y="879.500">14</text><text x="187.500" y="879.500">13</text><text x="246.700" y="879.500">12</text><text x="305.800" y="879.500">11</text><text x="365" y="879.500">10</text><text x="424" y="879.500">9</text><text x="483" y="879.500">8</text><text x="542" y="879.500">7</text><text x="601" y="879.500">6</text><text x="660" y="879.500">5</text><text x="719" y="879.500">4</text><text x="778" y="879.500">3</text><text x="837" y="879.500">2</text><text x="896.500" y="879.500">1</text><text x="955.500" y="879.500">0</text><text x="1014.500" y="879.500">−1</text>
            <text x="591" y="891.500">f1 (ppm)</text>
          </g>
          <text x="1" y="11" class="name">16.10.fid</text>
        </svg>
      </div>
      <div class="sheet">
        <div class="sheet-title"><b>2.</b>17.1.fid</div>
        <svg class="plot" width="1290" height="236" viewBox="0 0 1290 236">
          <defs>
            <pattern id="grid2" patternUnits="userSpaceOnUse" x="2" y="-7.700" width="44.190" height="79.200"><path d="M.5 0V80M0 .5H45" stroke="#b7c2b8" stroke-width="1.300"/></pattern>
          </defs>
          <rect width="1290" height="236" fill="#ebf5ec"/>
          <rect x="2" y="1" width="1288" height="235" fill="url(#grid2)"/>
          <path d="M0 .7H1290M.7 0V236" stroke="#9a9a9a" stroke-width="1.300"/>
          <path d="M817.500 1L812.500 236" fill="none" stroke="#8b2020" stroke-width="1.300"/><path d="M820 1L816.500 236M847.500 1L849.500 236" fill="none" stroke="#6c5fc0" stroke-width="1.300"/><path d="M819 1L815.500 236" fill="none" stroke="#e58ae0" stroke-width="1.300"/><path d="M845.500 1L847.500 236" fill="none" stroke="#8fb5a8" stroke-width="1.300"/><path d="M847.500 1L850.500 236" fill="none" stroke="#b0209a" stroke-width="1.500"/>
          <path d="M836.500 216V236" stroke="#ee6a50" stroke-width="1.400"/>
          <path d="M738 50V65M841.500 50V65" stroke="#1a2a8c" stroke-width="1.200"/><path d="M831.500 50L832.500 65" stroke="#f33" stroke-width="1.200"/>
          <g class="shifts"><text transform="translate(741.500 47) rotate(-90)" textLength="20" lengthAdjust="spacingAndGlyphs" fill="#1a2a8c">3.54</text><text transform="translate(835.500 47) rotate(-90)" textLength="42" lengthAdjust="spacingAndGlyphs" fill="#f22">3.32 H2O</text><text transform="translate(846 47) rotate(-90)" textLength="20" lengthAdjust="spacingAndGlyphs" fill="#1a2a8c">3.30</text></g>
          <text x="1" y="10.500" class="name">17.1.fid</text><text x="10" y="21.500" class="m1">M1</text>
        </svg>
      </div>
    </div>
    <div class="panel-tabs">
      <span class="gap first"></span>
      <div class="tabs"><span>Peaks</span><span>Line Fitting</span><span>Phase Correction</span><span class="current">Pages</span></div>
      <span class="gap"></span>
    </div>
  </div>

  <div class="desktop">
    <svg class="backdrop" viewBox="1379 116 1153 1316" width="1153" height="1316">
      <path d="M1500 340H2320C2400 355 2465 395 2476 465L2510 690C2514 755 2470 815 2405 818H1500z" fill="#c3c5c9"/>
      <path d="M1500 700H1930L1960 1050C1964 1120 1900 1177 1843 1177H1500z" fill="#c3c5c9"/>
    </svg>
    <div class="doc-window"><i></i><i></i><svg viewBox="0 0 26 30"><path d="M1 1H17L25 8V29H1z" fill="#fff" stroke="#222" stroke-width="1.500"/><circle cx="13" cy="18" r="7.500" fill="#c01c28"/><path d="M8 20L11 15L13 19L16 15L18 20" fill="none" stroke="#fff" stroke-width="2"/></svg><span>Document 2</span></div>
    <span class="brand">MestReNova</span>
  </div>
</div>

<div class="toolbar bottom">
  <span class="btn menu on"><svg viewBox="0 0 32 32"><path d="M8 1L9 26L14 21L19 30L22.500 28.500L18 19.500L25 19z" fill="#fff" stroke="#222" stroke-width="1.300" transform="translate(2 1) scale(.9)"/></svg></span>
  <span class="sep"></span>
  <span class="btn menu"><svg viewBox="0 0 32 32"><rect x="3" y="4" width="27" height="26"/></svg></span>
  <span class="btn menu"><svg viewBox="0 0 32 32"><rect x="4" y="4" width="26" height="26" fill="none" stroke="#000" stroke-width="4"/></svg></span>
  <span class="grip three"></span>
  <span class="btn"><svg viewBox="0 0 32 32"><text x="4" y="28" class="aa dim s">A</text><text x="13" y="28" class="aa">A</text><path d="M24 4L28 9H20z"/></svg></span>
  <span class="btn"><svg viewBox="0 0 32 32"><text x="3" y="28" class="aa dim">A</text><text x="19" y="28" class="aa s">A</text><path d="M23 9L19 4H27z"/></svg></span>
  <span class="btn"><svg viewBox="0 0 32 32"><text x="4" y="28" class="aa dim m">A</text><text x="16" y="28" class="aa m">A</text><path d="M19 5L26 13M26 5L19 13" stroke="#000" stroke-width="2.600"/></svg></span>
  <span class="sep"></span>
  <span class="btn menu on"><svg viewBox="0 0 32 32"><path d="M1 3.500H31M1 9.500H24M1 15.500H31M1 21.500H24M1 27.500H31" stroke="#000" stroke-width="2.800"/></svg></span>
  <span class="btn menu"><b class="bold">B</b></span>
  <span class="btn menu"><svg viewBox="0 0 32 32"><text x="2" y="25" class="xsub">X</text><text x="22" y="29" class="two">2</text></svg></span>
  <span class="sep"></span>
  <span class="btn menu"><svg viewBox="0 0 32 32"><text x="7" y="25" class="acol">A</text></svg></span>
  <div class="font-select">Arial</div>
</div>
<div class="status">Signature:</div>

<div class="dialog">
  <div class="titlebar"><i></i><i></i><i class="green"></i><span>Save As</span></div>
  <div class="form">
    <label>Save As:</label><div class="input focus"><span>Spectrum1</span></div>
    <label class="tags">Tags:</label><div class="input"></div>
  </div>
  <div class="nav">
    <span class="nbtn w51"><svg width="16" height="26" viewBox="0 0 16 26"><path d="M14 2L3 13L14 24" fill="none" stroke="#3c3c3c" stroke-width="2.600"/></svg></span>
    <span class="nbtn w51"><svg width="16" height="26" viewBox="0 0 16 26"><path d="M2 2L13 13L2 24" fill="none" stroke="#b0b0b0" stroke-width="2.600"/></svg></span>
    <span class="nbtn view"><svg width="50" height="22" viewBox="0 0 50 22"><path d="M1 2H6V8H1zM11 2H16V8H11zM21 2H26V8H21zM1 14H6V20H1zM11 14H16V20H11zM21 14H26V20H21z" fill="none" stroke="#4a4a4a" stroke-width="2"/><path d="M37 8L43.500 14L50 8" fill="none" stroke="#4a4a4a" stroke-width="2.800"/></svg></span>
    <span class="nbtn view folder"><svg width="34" height="26" viewBox="0 0 34 26"><path d="M26 3H13L11 1H1V24H30V17M1 7H22" fill="none" stroke="#777" stroke-width="1.900"/><path d="M29 4V15M23.500 9.500H34.500" stroke="#444" stroke-width="2"/></svg></span>
    <span class="path"><svg width="30" height="26" viewBox="0 0 30 26"><path d="M0 2Q0 0 2 0H9L11 3H28Q30 3 30 5V24Q30 25 28 25H2Q0 25 0 24z" fill="#84c8f2"/><path d="M0 5H30" stroke="#5fb0e2"/><path d="M0 24.500H30" stroke="#62aeda" stroke-width="1.500"/></svg><span>untitled folder</span><svg class="updown" width="16" height="26" viewBox="0 0 16 26"><path d="M1.500 9L8 2L14.500 9M1.500 17L8 24L14.500 17" fill="none" stroke="#4a4a4a" stroke-width="2.400"/></svg></span>
    <span class="collapse"><svg width="16" height="10" viewBox="0 0 16 10"><path d="M1 9L8 2L15 9" fill="none" stroke="#333" stroke-width="2.800"/></svg></span>
    <span class="search"><svg width="26" height="26" viewBox="0 0 26 26"><circle cx="10.500" cy="11" r="9.500" fill="none" stroke="#4a4a4a" stroke-width="2"/><path d="M17 18L25 25" stroke="#4a4a4a" stroke-width="2.200"/></svg>Search</span>
  </div>
  <div class="browser">
    <div class="places">
      <h4>Favorites</h4>
      <p><svg viewBox="0 0 36 34"><path d="M22 3L11 20M15 3L31 30M3 23H20M27 23H33M6 29L8 27" fill="none" stroke="#666b6a" stroke-width="4.600" stroke-linecap="round"/></svg>Applications</p>
      <p><svg viewBox="0 0 36 30"><use href="#folder"/></svg>GitHub</p>
      <p><svg viewBox="0 0 36 30"><use href="#folder"/></svg>Projects</p>
      <p><svg viewBox="0 0 36 30"><use href="#folder"/></svg>Desktop</p>
      <p><svg viewBox="0 0 36 30"><use href="#folder"/></svg>Documents</p>
      <p><svg viewBox="0 0 36 36"><circle cx="18" cy="18" r="17.500" fill="#666b6a"/><path d="M13.500 7H22.500V17H29L18 29L7 17H13.500z" fill="#e4e8e7"/></svg>Downloads</p>
      <p><svg viewBox="0 0 36 24"><path d="M9 23Q1 22 1 15Q2 8 9 8Q12 1 19 1Q26 2 28 9Q35 10 35 16Q34 23 28 23z" fill="#a9adac" stroke="#666b6a" stroke-width="1.500"/><path d="M6 22L23 13L33 20Q31 22 28 22z" fill="#d5d8d7"/></svg>OneDrive - PN...</p>
      <h4 class="cloud">iCloud</h4>
      <p><svg viewBox="0 0 36 28"><path d="M8 27Q1 25 1 19Q2 13 7 13Q7 6 13 6Q16 1 21 1Q28 2 29 10Q35 12 35 19Q34 26 28 27z" fill="#d2d6d5" stroke="#666b6a" stroke-width="1.600"/></svg>iCloud Drive</p>
    </div>
    <div class="files"></div>
  </div>
  <div class="format-row"></div>
  <div class="footer"><button>New Folder</button><button class="cancel">Cancel</button><button class="save">Save</button></div>
</div>

<ul class="popup">
  <li class="checked">MestReNova Document (*.mnova)</li>
  <li>MestReNova Pages (*.mnpag *.mnova)</li>
  <li>MestReNova Customization (*.mncs)</li>
  <li>Adobe PDF Files (*.pdf)</li>
  <li>BMP Image (*.bmp)</li>
  <li>Galactic (*.spc)</li>
  <li>JCAMP-DX (*.jdx *.dx *.jcm *.cs *.jcamp)</li>
  <li>JPEG Image (*.jpg *.jpeg)</li>
  <li>MestReC (*.mrc)</li>
  <li class="selected">NMR CSV File (*.csv *.txt)</li>
  <li>PNG Image (*.png)</li>
  <li>PPM Image (*.ppm)</li>
  <li>SVG Image (*.svg)</li>
  <li>TIFF Image (*.tiff)</li>
  <li>XBM Image (*.xbm)</li>
  <li>XPM Image (*.xpm)</li>
  <li>Script: NMR 1D Custom CSV (*.csv *.txt)</li>
  <li>Script: NMR 1D Peak List (*.csv *.txt)</li>
  <li>Script: NMR CSV Matrix (*.csv *.txt)</li>
  <li>Script: NMR CSV Matrix (Transposed) (*.csv *.txt)</li>
  <li>Script: NMR Peak Table (*.csv *.txt)</li>
</ul>
</body>
</html>
```
FILE: styles.css
```css
* { box-sizing: border-box; }
body {
  margin: 0; width: 2532px; height: 1534px; overflow: hidden; position: relative;
  display: flex; flex-direction: column; background: #ccc;
  font-family: Inter, "Liberation Sans", sans-serif; font-size: 25px; color: #000; letter-spacing: .2px;
}
svg { display: block; flex: none; letter-spacing: 0; }
.defs { position: absolute; }

/* toolbars */
.toolbar {
  flex: none; display: flex; height: 60px;
  background: linear-gradient(#fff 0 1px, #efefef 1px, #c6c6c6 57px, #adadad 57px 59px, #dcdcdc 59px);
}
.toolbar > :first-child { margin-left: -2px; }
.toolbar.second { height: 56px; background: linear-gradient(#fff 0 1px, #ebebeb 1px, #bcbcbc 53px, #a0a0a0 53px 55px, #c8c8c8 55px); }
.toolbar.bottom { background: linear-gradient(#fff 0 1px, #ededed 1px, #c2c2c2 57px, #adadad 57px 59px, #6f6f6f 59px); }
.btn { position: relative; flex: none; width: 60px; display: flex; align-items: center; justify-content: center; }
.btn > * { position: relative; }
.btn.menu { width: 84px; }
.btn svg, .cell svg { width: 32px; height: 32px; overflow: visible; }
.off > svg { opacity: .58; }
.on::before { content: ""; position: absolute; inset: 2px 4px; border-radius: 10px 10px 0 0; background: linear-gradient(#cbcbcb, #adadad); }
.bottom .on::before { inset: 4px 4px; }
.menu::after {
  content: ""; position: absolute; left: calc(50% + 20px); top: calc(50% + 2px);
  width: 16px; height: 15px; background: #5f5f5f; clip-path: polygon(0 0, 100% 0, 50% 100%);
}
.sep { flex: none; width: 20px; margin: 4px 0; background: repeating-linear-gradient(#6c6c6c 0 2px, transparent 2px 6px) 8px 0 / 2px 50px no-repeat; }
.second .sep { background-size: 2px 44px; }
.grip { flex: none; width: 18px; margin: 12px 0; background: radial-gradient(circle at 14px 6px, #979797 2px, transparent 2.600px) 0 0 / 18px 12px repeat-y; }
.grip.three { height: 36px; }
.grip.two { height: 24px; }
.f1, .f2, .ft { font: bold 36px "Open Sans", sans-serif; color: #ee2020; transform: scaleX(.74); letter-spacing: 0; }
.f2 { color: #769bcf; }
.ft { font-size: 32px; transform: scaleX(.62); }
.ft-mini { font: 900 19px Inter, sans-serif; fill: #ee2020; }
.zoom-select {
  margin: 8px 11px 12px; width: 272px; height: 40px; display: flex; align-items: center; background: #fff; border: 1px solid #aaa;
  border-radius: 0 7px 7px 0; padding-left: 5px; justify-content: space-between; flex: none;
}
.zoom-select i { width: 35px; height: 40px; flex: none; margin-right: -1px; border-radius: 0 7px 7px 0; background: linear-gradient(#74a4f6, #2468f5); display: flex; align-items: center; justify-content: center; }
.zoom-select i svg { width: 16px; height: 10px; }

/* main area */
.main { flex: none; height: 1316px; display: flex; }
.sidebar { flex: none; width: 58px; display: flex; flex-direction: column; background: linear-gradient(90deg, #e4e4e4, #dadada 25px, #bdbdbd 55px, #a3a3a3 55px 57px, #d8d8d8 57px); }
.cell { position: relative; flex: none; height: 60px; width: 56px; display: flex; align-items: center; padding-left: 2px; }
.cell svg { position: relative; }
.cell.menu::after { left: 38px; }
.cell.on::before { inset: 4px 0 4px 0; border-radius: 0 8px 0 0; background: linear-gradient(90deg, #cdcdcd, #b4b4b4); }
.vgrip { flex: none; height: 18px; margin: 2px 0 0; background: radial-gradient(circle at 6px 16px, #979797 2px, transparent 2.600px) 0 0 / 12px 18px; width: 36px; }
.vgrip ~ .vgrip { margin-top: 0; }
.vsep { flex: none; height: 20px; width: 50px; margin-left: 2px; background: repeating-linear-gradient(90deg, #6c6c6c 0 2px, transparent 2px 6px) 0 8px / 50px 2px no-repeat; }
.xn { font: bold 17px Inter, sans-serif; fill: #e87070; }
.xs { font-size: 11px; }
.pages { flex: none; width: 1321px; display: flex; flex-direction: column; overflow: hidden; border-left: 1px solid #fff; }
.pages-head { flex: none; height: 44px; padding: 6px 3px; display: flex; gap: 8px; background: linear-gradient(#ededed, #c9c9c9 40px, #a5a5a5 41px 42px, #d8d8d8 43px, #888 44px); }
.round { width: 28px; height: 28px; }
.pages-body { flex: none; height: 1229px; background: #a4a7af; padding: 3px 0 0 11px; border-left: 1px solid #e8e8e8; overflow: hidden; }
.sheet { width: 1330px; padding-left: 13px; }
.sheet.active { height: 950px; padding-left: 11px; border: 2px solid #3070cf; background: linear-gradient(90deg, #ffefc9, #fde2a2 380px, #f7cc62 900px); box-shadow: 0 1px 0 #f5dc9c; }
.plot { overflow: visible; }
.sheet-title { height: 43px; padding-top: 4px; line-height: 44px; display: flex; gap: 6px; font-size: 27px; letter-spacing: 0; }
.active .sheet-title { color: #3070cf; gap: 3px; padding-top: 5px; }
.sheet:not(.active) .sheet-title { height: 40px; padding-top: 1px; }
.sheet-title b { font-weight: 700; }
.ticks { font: 12px "Noto Sans", sans-serif; text-anchor: middle; }
.name { font: 12px "Noto Sans", sans-serif; }
.m1 { font: bold 11.500px "Noto Sans", sans-serif; fill: #0a8c1a; }
.shifts { font: 10px "DejaVu Sans", sans-serif; }
.panel-tabs { flex: none; height: 43px; display: flex; background: #ebebeb; border-top: 1px solid #b0b0b0; }
.gap { height: 22px; flex: 1; background: #e1e1e1; margin: 1px 0 0 5px; }
.gap.first { flex: none; width: 317px; margin-left: 0; margin-right: 6px; border-radius: 0 0 0 6px; }
.tabs { display: flex; height: 39px; margin-top: 3px; background: #fff; border-radius: 7px; overflow: hidden; box-shadow: inset 0 1px #c4c4c4; }
.tabs span { width: 114px; text-align: center; line-height: 35px; border-right: 2px solid #e2e2e2; padding-right: 2px; }
.tabs span:nth-child(2) { width: 184px; }
.tabs span:nth-child(3) { width: 257px; border: 0; }
.tabs .current { width: 118px; border: 0; padding-left: 4px; background: linear-gradient(#74a4f6, #2468f5); color: #fff; }

.desktop { flex: 1; position: relative; background: #a4a7af; overflow: hidden; border-top: 1px solid #8f9299; }
.backdrop { position: absolute; left: 0; top: -1px; filter: drop-shadow(14px 16px 20px rgba(60, 62, 70, .42)); }
.doc-window { position: absolute; left: 300px; top: 1271px; width: 485px; height: 45px; background: #f6f6f6; border-radius: 0 12px 0 0; display: flex; align-items: center; padding-left: 149px; }
.doc-window i { width: 24px; height: 24px; border-radius: 50%; background: #dcdcdc; border: 1px solid #c8c8c8; margin-right: 16px; }
.doc-window svg { width: 25px; height: 30px; margin-left: 17px; }
.doc-window span { margin-left: -12px; z-index: 1; letter-spacing: .5px; }
.brand { position: absolute; left: 1103px; top: 1275px; font-weight: 700; font-size: 26px; color: #d3d5d9; }

.aa { font: bold 23px "Liberation Serif", serif; }
.aa.s { font-size: 12px; }
.aa.m { font-size: 17px; }
.dim { fill: #9c9c9c; }
.bold { font: bold 40px "Liberation Serif", serif; }
.xsub { font: 27px "Liberation Sans", sans-serif; }
.two { font: 15px "Liberation Sans", sans-serif; fill: #d22; }
.acol { font: bold 26px "Liberation Sans", sans-serif; stroke: #000; stroke-width: .6; }
.font-select { margin: 8px 0 0 9px; height: 39px; width: 500px; background: #fff; border: 1px solid #bbb; border-radius: 7px; box-shadow: 0 1px 1px #999; padding-left: 16px; line-height: 38px; }
.status { flex: none; height: 42px; background: linear-gradient(#e9e9e9, #b2b2b2); text-align: right; padding: 8px 23px 0 0; font-weight: 700; font-size: 26.500px; line-height: 36px; }

/* save dialog */
.dialog {
  position: absolute; left: 420px; top: 117px; width: 1996px; height: 941px; border-radius: 11px; background: #ebebeb; overflow: clip;
  display: flex; flex-direction: column;
  box-shadow: 0 0 1px 1px rgba(0, 0, 0, .38), 0 24px 85px rgba(0, 0, 0, .55);
}
.titlebar { flex: none; height: 45px; position: relative; display: flex; align-items: center; padding: 2px 0 0 16px; gap: 16px; background: linear-gradient(#f6f6f6 0 1px, #e6e6e6 2px, #cfcfcf); border-bottom: 2px solid #b2b2b2; }
.titlebar i { width: 24px; height: 24px; border-radius: 50%; background: #d0d0d0; border: 1px solid #b2b2b2; }
.titlebar .green { background: #62c655; border-color: #4fae42; }
.titlebar span { position: absolute; left: 0; right: 0; text-align: center; color: #484848; }
.form { flex: none; height: 156px; padding-top: 33px; display: grid; grid-template-columns: 794px 498px; grid-template-rows: 40px 42px; gap: 18px 12px; border-bottom: 2px solid #d2d2d2; align-content: start; }
.form label { text-align: right; color: #757575; line-height: 40px; }
.form .tags { line-height: 43px; }
.input { background: #fff; border: 1px solid #b4b4b4; padding-left: 6px; line-height: 36px; color: #222; }
.input.focus { border-color: #6b90d8; box-shadow: 0 0 0 6px #8aabec; border-radius: 1px; }
.input.focus span { display: inline-block; border-right: 2px solid #000; height: 32px; line-height: 32px; vertical-align: middle; margin-top: -3px; letter-spacing: .4px; }
.nav { flex: none; height: 84px; display: flex; padding: 17px 0 0 21px; border-bottom: 2px solid #d2d2d2; align-items: flex-start; }
.nbtn, .path, .collapse, .search { flex: none; height: 46px; display: flex; align-items: center; justify-content: center; border: 1px solid #d0d0d0; border-bottom-color: #b8b8b8; border-radius: 8px; background: linear-gradient(#fff, #f4f4f4); color: #555; }
.w51 { width: 52px; }
.view { width: 90px; margin-left: 14px; }
.view.folder { margin-left: 10px; }
.path { width: 444px; margin-left: 475px; justify-content: flex-start; padding-left: 13px; gap: 9px; letter-spacing: .45px; }
.updown { margin-left: auto; margin-right: 10px; }
.collapse { width: 40px; height: 40px; margin: 3px 0 0 16px; background: #fff; }
.search { width: 595px; margin-left: 76px; justify-content: flex-start; padding-left: 11px; gap: 9px; color: #b0b0b0; letter-spacing: .4px; }
.browser { flex: none; height: 504px; display: flex; overflow: hidden; }
.places { width: 312px; background: #dde1e0; border-right: 2px solid #c4c7c6; padding: 16px 0 0 18px; letter-spacing: .35px; }
.places h4 { margin: 0 0 5px; font-size: 22px; line-height: 28px; font-weight: 600; color: #6d7271; letter-spacing: 0; }
.places .cloud { margin: 7px 0 10px; padding-top: 18px; height: 40px; }
.places p { margin: 0; height: 52px; display: flex; align-items: center; gap: 8px; padding-left: 18px; color: #2b2f2e; }
.places p svg { width: 36px; }
.files { flex: 1; background: #fff; }
.format-row { flex: none; height: 69px; border: solid #d2d2d2; border-width: 2px 0; }
.footer { display: flex; padding: 22px 21px 0; }
.footer button { font: inherit; letter-spacing: .45px; height: 40px; width: 192px; padding: 0; border: 1px solid #c6c6c6; border-bottom-color: #aaa; border-radius: 7px; background: #fff; color: #222; margin-right: auto; }
.footer .cancel { width: 153px; margin: 0 19px 0 0; }
.footer .save { width: 154px; margin: 0; border: 0; background: linear-gradient(#74a4f6, #2468f5); color: #fff; }

/* format menu */
.popup {
  position: absolute; left: 1148px; top: 758px; width: 674px; height: 772px; margin: 0; padding: 8px 0; list-style: none; border-radius: 10px;
  background: linear-gradient(90deg, rgba(236, 240, 236, .85), rgba(236, 240, 236, .6) 20%, rgba(236, 238, 238, 0) 55%), linear-gradient(#f2f2f2, #ebebeb 25%, #dcdcde 40%, #d2d4d8 50%, #d3d6d9 65%, #e0e1e2 85%, #e5e5e5);
  box-shadow: 0 0 1px 1px rgba(0, 0, 0, .22), 0 10px 36px rgba(0, 0, 0, .28);
}
.popup li { position: relative; height: 36px; line-height: 34px; padding-left: 42px; color: #333638; white-space: nowrap; letter-spacing: .21px; }
.popup .selected { background: linear-gradient(90deg, #4a86ee, #3f7ce6); color: #fff; }
.popup .checked::before { content: ""; position: absolute; left: 17px; top: 6px; width: 9px; height: 17px; border: solid #333; border-width: 0 2.500px 2.500px 0; transform: rotate(38deg); }
```
